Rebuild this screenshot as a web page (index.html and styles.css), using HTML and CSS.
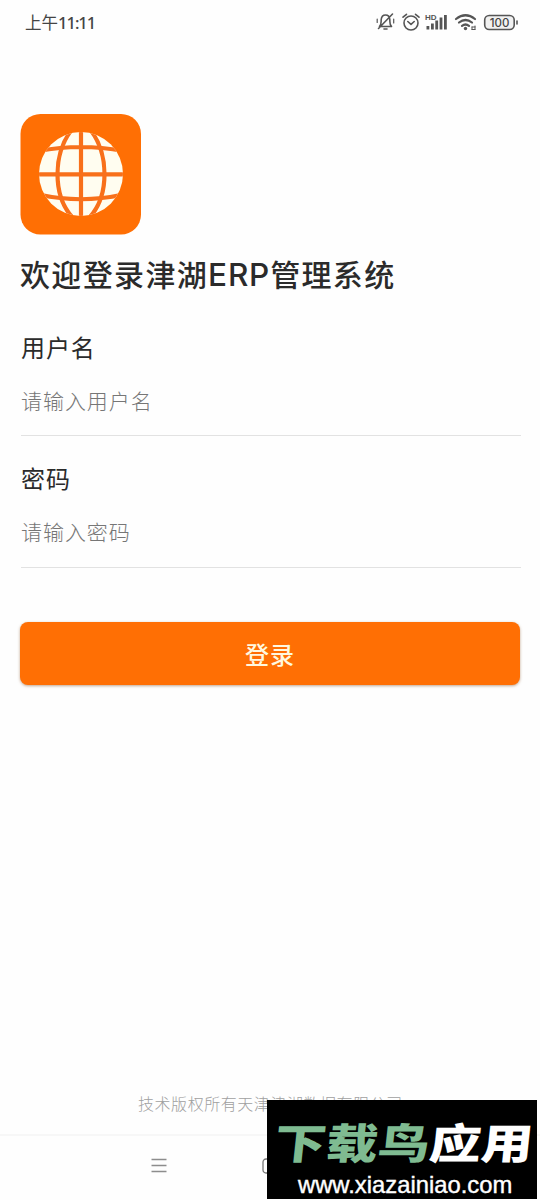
FILE: index.html
```html
<!DOCTYPE html>
<html lang="zh-CN">
<head>
<meta charset="utf-8">
<title>登录</title>
<link rel="stylesheet" href="styles.css">
</head>
<body>
<div class="screen">
  <header class="status">
    <div class="clock">上午<span class="digits">11:11</span></div>
    <svg class="status-icons" width="146" height="24" viewBox="0 0 146 24" fill="none" stroke="#555" stroke-width="1.6" stroke-linecap="round" stroke-linejoin="round">
      <path d="M4.5 16.5C6.500 15 6 13 6.200 9.500C6.500 6.500 8 5 10.500 5C13 5 14.600 6.500 14.800 9.500C15 13 14.500 15 16.500 16.500ZM9 19H12M17.500 4L3.500 18.500"/>
      <path d="M2.200 9v3.500M18.700 9v4" stroke-width="1.2"/>
      <circle cx="36" cy="13" r="7"/><path d="M32.800 11.500L36 14.300L39.200 11.500M28 7.200L31.500 4.300M40.500 4.300L44 7.200"/>
      <g class="solid"><rect x="51.500" y="16" width="2.800" height="3.500"/><rect x="56" y="13.500" width="2.800" height="6"/><rect x="60.300" y="10.500" width="2.800" height="9"/><rect x="64.600" y="7.500" width="2.800" height="12"/><rect x="69" y="5" width="2.800" height="14.500"/></g>
      <text class="hd" x="50" y="9.500">HD</text>
      <path d="M81 9Q90.500 1.500 100 9M84 12.500Q90.500 7.500 97 12.500M87 15.800Q90.500 13.200 94 15.800" stroke-width="2.200"/>
      <circle class="solid" cx="90.500" cy="18.500" r="1.700"/>
      <path d="M97 17h3M97 19.500h3M97 17v2.500M100 16v3.500" stroke-width="1"/>
      <rect class="cell" x="109.700" y="5.500" width="29.500" height="14" rx="4.500"/><path d="M142 11v3"/>
      <text class="charge" x="124.500" y="16.800" text-anchor="middle">100</text>
    </svg>
  </header>
  <main class="login">
    <svg class="logo" width="122" height="122" viewBox="0 0 122 122">
      <rect x="0.500" y="1" width="120.500" height="120.500" rx="20" fill="#ff6f04"/>
      <clipPath id="globe"><circle cx="61" cy="61" r="42"/></clipPath>
      <circle cx="61" cy="61" r="42" fill="#fffdf0"/>
      <g clip-path="url(#globe)" fill="none" stroke="#f8701a" stroke-width="4.200">
        <path d="M61 18V104M18 61.300H104M18 38Q61 30 104 38"/>
        <path d="M18 81.500Q61 91 104 81.500"/>
        <path d="M53 15C44 26 37.500 42 37.500 61C37.500 80 44 96 54 106M69 15C78 26 84.500 42 84.500 61C84.500 80 78 96 68 106"/>
      </g>
    </svg>
    <h1 class="title">欢迎登录津湖<span class="erp">ERP</span>管理系统</h1>
    <div class="field">
      <div class="label">用户名</div>
      <div class="hint">请输入用户名</div>
    </div>
    <div class="field">
      <div class="label">密码</div>
      <div class="hint">请输入密码</div>
    </div>
    <div class="submit">登录</div>
  </main>
  <footer class="copyright">技术版权所有天津津湖数据有限公司</footer>
  <nav class="navbar">
    <svg width="16" height="15" viewBox="0 0 16 15" stroke="#8d8d8d" stroke-width="1.300"><path d="M.5 1.500h15M.5 7.500h15M.5 13.500h15"/></svg>
    <svg class="home" width="16" height="16" viewBox="0 0 16 16" fill="none" stroke="#777" stroke-width="1.300"><rect x="1" y="1" width="14" height="14" rx="3"/></svg>
  </nav>
  <aside class="watermark">
    <div class="brand"><span class="green">下载鸟</span>应用</div>
    <div class="site">www.xiazainiao.com</div>
  </aside>
</div>
</body>
</html>
```
FILE: styles.css
```css
* { box-sizing: border-box; }
body { margin: 0; background: #fff; }
.screen {
  position: relative;
  width: 540px;
  height: 1200px;
  overflow: hidden;
  display: flex;
  flex-direction: column;
  background: #fefefe;
  font-family: "Noto Sans CJK SC", sans-serif;
  color: #2b2b2b;
  white-space: nowrap;
}
.status {
  height: 113px;
  padding: 10px 19px 0 25px;
  display: flex;
  justify-content: space-between;
  align-items: flex-start;
}
.clock { font-size: 16.5px; line-height: 24px; color: #444; }
.digits { font-family: "Noto Sans", sans-serif; font-weight: 500; letter-spacing: -1px; }
.status-icons { display: block; }
.solid { fill: #555; stroke: none; }
.cell { fill: #f1f1f1; }
.hd { font: 700 8px "Liberation Sans", sans-serif; fill: #555; stroke: none; }
.charge { font: 500 11.5px Inter, sans-serif; fill: #444; stroke: none; }
.login { height: 974px; padding: 0 19px 0 20px; }
.logo { display: block; }
.title {
  margin: 16px 0 0;
  font-size: 30px;
  font-weight: 500;
  line-height: 44px;
  letter-spacing: 1.35px;
}
.erp { font-family: Inter, sans-serif; font-size: 31.5px; letter-spacing: 0.8px; }
.field {
  height: 105px;
  margin-left: 1px;
  border-bottom: 1px solid #e2e2e2;
}
.title + .field { margin-top: 34px; }
.field + .field { height: 106px; margin-top: 26px; }
.label {
  font-size: 24px;
  line-height: 31px;
  letter-spacing: 0.9px;
}
.hint {
  margin-top: 23px;
  font-size: 21px;
  font-weight: 300;
  line-height: 30px;
  letter-spacing: 0.95px;
  color: #767676;
}
.submit {
  height: 63px;
  margin: 54px 1px 0 0;
  border-radius: 8px;
  background: #ff6f04;
  box-shadow: 0 1px 3px #9a6a4499;
  color: #fff8df;
  font-size: 24px;
  font-weight: 500;
  line-height: 63px;
  letter-spacing: 1px;
  text-align: center;
}
.copyright {
  height: 47px;
  padding-left: 138px;
  padding-top: 4px;
  font-size: 16px;
  font-weight: 300;
  line-height: 24px;
  letter-spacing: 0.55px;
  color: #a0a0a0;
}
.navbar {
  height: 66px;
  padding: 22px 0 0 151px;
  display: flex;
  gap: 95px;
  border-top: 2px solid #f7f7f7;
}
.watermark {
  position: absolute;
  right: 3px;
  bottom: 1px;
  width: 270px;
  height: 99px;
  padding: 11px 0 0 8px;
  background: #000;
  color: #fff;
}
.brand {
  width: 210px;
  font-size: 42px;
  font-weight: 900;
  line-height: 60px;
  transform: scaleX(1.23) skewX(-5deg);
  transform-origin: 0 50%;
}
.green { color: #7fbb91; }
.site {
  margin: 0 0 0 23px;
  font: 23.8px/27px "Liberation Sans", sans-serif;
  -webkit-text-stroke: 0.4px #fff;
}
```
